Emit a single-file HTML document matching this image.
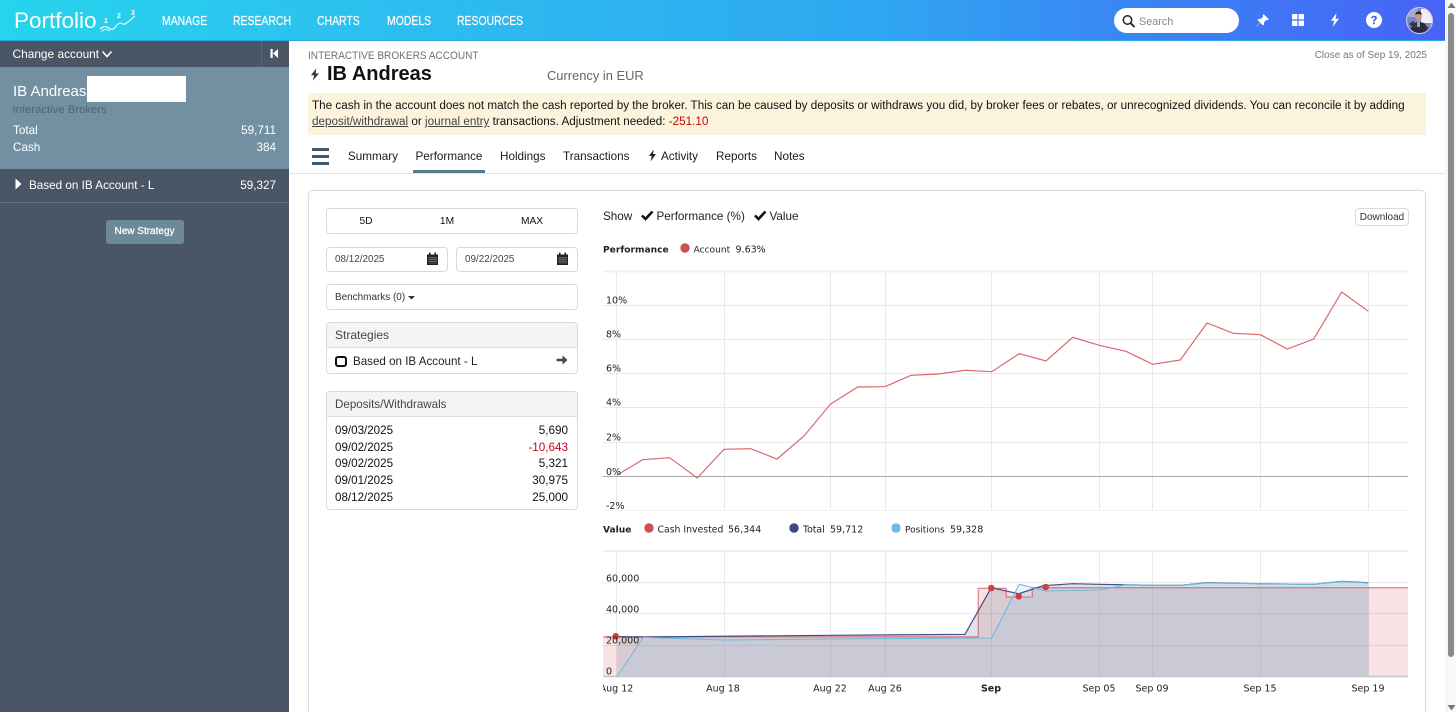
<!DOCTYPE html>
<html><head><meta charset="utf-8"><title>Portfolio</title>
<style>
html,body{margin:0;padding:0;width:1456px;height:712px;overflow:hidden;background:#fff;font-family:"Liberation Sans",sans-serif;color:#111}
#w{position:relative;width:1456px;height:712px;overflow:hidden}
.a{position:absolute}
.t{position:absolute;white-space:nowrap;line-height:16px;height:16px}
.c{transform:translateY(-8px)}
.r{text-align:right}
.nav{color:#fff;font-size:12.5px;-webkit-text-stroke:.2px #fff;transform-origin:0 50%;transform:translateY(-8px) scaleX(.835)}
.box{position:absolute;box-sizing:border-box;background:#fff;border:1px solid #d9d9d9;border-radius:4px}
.tab{font-size:11.7px;color:#1a1a1a}
.sm{font-size:11.7px}
.d{font-size:11.6px}
.tab.c,.sm.c,.d.c{transform:translateY(-7px)}
svg text{font-family:"DejaVu Sans",sans-serif;font-size:9.5px;fill:#222}
</style></head><body><div id="w">
<!-- header -->
<div class="a" style="left:0;top:0;width:1445px;height:41px;background:linear-gradient(90deg,#27d4ec 0%,#2cc0ef 25%,#2fa8f1 60%,#3b82f4 80%,#4763f6 100%);border-bottom:1px solid #27a9e8;box-sizing:border-box"></div>
<div class="t c" style="left:14px;top:21px;color:#fff;font-size:22.5px;line-height:26px;height:26px;transform:translateY(-13px)">Portfolio</div>
<svg class="a" style="left:98px;top:3px" width="42" height="30" viewBox="0 0 42 30">
<path d="M2 26C4 24 6 23 9 24C11 25 13 27 15 26C18 24 20 20 22 20C24 20 25 22 27 21C30 19 34 16 37 13" fill="none" stroke="#fff" stroke-width="1.100"/>
<path d="M3 28.500C6 26 9 26 12 28" fill="none" stroke="#fff" stroke-width=".8"/>
<text x="6" y="20" style="font:bold 7px 'Liberation Sans';fill:#fff">1</text>
<text x="19" y="15" style="font:bold 7px 'Liberation Sans';fill:#fff">2</text>
<text x="33" y="12" style="font:bold 7px 'Liberation Sans';fill:#fff">3</text>
</svg>
<div class="t nav" style="left:162px;top:21px">MANAGE</div>
<div class="t nav" style="left:233px;top:21px">RESEARCH</div>
<div class="t nav" style="left:317px;top:21px">CHARTS</div>
<div class="t nav" style="left:387px;top:21px">MODELS</div>
<div class="t nav" style="left:457px;top:21px">RESOURCES</div>
<div class="a" style="left:1114px;top:8px;width:125px;height:25px;background:#fff;border-radius:13px"></div>
<svg class="a" style="left:1121px;top:13px" width="16" height="16" viewBox="0 0 16 16"><circle cx="6.500" cy="7" r="4.200" fill="none" stroke="#222" stroke-width="1.500"/><path d="M9.700 10.200L13 13.500" stroke="#222" stroke-width="1.900" stroke-linecap="round"/></svg>
<div class="t c" style="left:1139px;top:21.500px;color:#888;font-size:10.800px">Search</div>
<svg class="a" style="left:1254.500px;top:12.500px" width="15" height="15" viewBox="0 0 14 14"><path d="M8 1L13 6L11.600 6.800L10.600 6.400L8.400 8.600L8.600 10.600L7.400 11.600L5 9.200L1.200 13L1 12.800L4.800 9L2.400 6.600L3.400 5.400L5.400 5.600L7.600 3.400L7.200 2.400Z" fill="#fff"/></svg>
<svg class="a" style="left:1292px;top:14px" width="12" height="12" viewBox="0 0 12 12"><path d="M0 1Q0 0 1 0H5.400V5.400H0ZM6.600 0H11Q12 0 12 1V5.400H6.600ZM0 6.600H5.400V12H1Q0 12 0 11ZM6.600 6.600H12V11Q12 12 11 12H6.600Z" fill="#fff"/></svg>
<svg class="a" style="left:1330px;top:13px" width="10" height="14" viewBox="0 0 10 14"><path d="M6.500 0L1 7.800H4.200L2.600 14L9 5.800H5.600Z" fill="#fff"/></svg>
<svg class="a" style="left:1366px;top:12px" width="16" height="16" viewBox="0 0 16 16"><circle cx="8" cy="8" r="8" fill="#fff"/><path d="M5.200 6.200C5.300 4.600 6.500 3.700 8.100 3.700C9.700 3.700 10.900 4.700 10.900 6C10.900 7.900 8.700 7.800 8.700 9.500H7.100C7.100 7.200 9.100 7.200 9.100 6C9.100 5.500 8.700 5.100 8 5.100C7.300 5.100 6.900 5.600 6.800 6.200Z" fill="#3a57ee"/><rect x="7" y="10.400" width="1.800" height="1.800" fill="#3a57ee"/></svg>
<svg class="a" style="left:1406px;top:7px" width="27" height="27" viewBox="0 0 27 27"><defs><clipPath id="av"><circle cx="13.500" cy="13.500" r="13"/></clipPath></defs><circle cx="13.500" cy="13.500" r="13.500" fill="#c9c6d8"/><g clip-path="url(#av)"><rect width="27" height="27" fill="#7f86c4"/><rect x="15" y="2" width="12" height="14" fill="#eef0f6"/><rect y="0" width="12" height="10" fill="#a5a9d2"/><rect y="20" width="27" height="7" fill="#4a4ab8"/><path d="M5 27C5 19 8 15 12 15C15 15 19 15 21 20L20 27Z" fill="#2a2c3c"/><path d="M3 17L7 14L11 19L9 22Z" fill="#34364a"/><ellipse cx="12.500" cy="9.500" rx="3.200" ry="4.400" fill="#c09a84"/><path d="M9 8Q10 3.500 14 4.500Q16 6 15.500 8Q12 6 9 8Z" fill="#2d2320"/><rect x="11" y="14" width="3" height="6" fill="#9aa5c4"/></g><circle cx="13.500" cy="13.500" r="13" fill="none" stroke="#c7c9dc" stroke-width="1"/></svg>

<!-- sidebar -->
<div class="a" style="left:0;top:41px;width:289px;height:671px;background:#4a5565"></div>
<div class="a" style="left:0;top:67px;width:289px;height:102px;background:#7290a2"></div>
<div class="a" style="left:0;top:202px;width:289px;height:1px;background:#65717f"></div>
<div class="a" style="left:261px;top:41px;width:1px;height:26px;background:#5d6877"></div>
<div class="t c" style="left:12.500px;top:54px;color:#fff;font-size:11.900px">Change account</div>
<svg class="a" style="left:101px;top:50px" width="12" height="9" viewBox="0 0 12 9"><path d="M1.500 1.500L6 6.500L10.500 1.500" fill="none" stroke="#fff" stroke-width="1.600"/></svg>
<svg class="a" style="left:270px;top:48px" width="9" height="11" viewBox="0 0 9 11"><rect x="0.500" y="1" width="2.200" height="9" fill="#fff"/><path d="M8 1V10L3 5.500Z" fill="#fff"/></svg>
<div class="t c" style="left:13px;top:92px;color:#fff;font-size:15px">IB Andreas</div>
<div class="a" style="left:87px;top:76px;width:99px;height:26px;background:#fff"></div>
<div class="t c" style="left:12.500px;top:110px;color:#54626f;font-size:11.300px">Interactive Brokers</div>
<div class="t c sm" style="left:13px;top:130px;color:#fff">Total</div>
<div class="t c sm r" style="left:200px;width:76px;top:130px;color:#fff">59,711</div>
<div class="t c sm" style="left:13px;top:147px;color:#fff">Cash</div>
<div class="t c sm r" style="left:200px;width:76px;top:147px;color:#fff">384</div>
<svg class="a" style="left:14px;top:177px" width="9" height="14" viewBox="0 0 9 14"><path d="M1.500 1.500L7.500 7L1.500 12.500Z" fill="#fff"/></svg>
<div class="t c sm" style="left:29px;top:185px;color:#fff">Based on IB Account - L</div>
<div class="t c sm r" style="left:200px;width:76px;top:185px;color:#fff">59,327</div>
<div class="a" style="left:105.500px;top:220px;width:78px;height:24px;background:#6c8a9a;border-radius:3px;color:#fff;font-size:10px;line-height:24.500px;text-align:center;-webkit-text-stroke:.25px #fff">New Strategy</div>

<!-- title -->
<div class="t" style="left:308px;top:47.500px;color:#707070;font-size:11px;transform-origin:0 50%;transform:scaleX(.915)">INTERACTIVE BROKERS ACCOUNT</div>
<svg class="a" style="left:310px;top:68px" width="10" height="13" viewBox="0 0 10 13"><path d="M6.200 0.500L1 7.200H4.200L2.800 12.500L9 5.500H5.600Z" fill="#333"/></svg>
<div class="t c" style="left:327px;top:73.500px;font-size:20px;font-weight:bold;color:#111;line-height:24px;height:24px;transform:translateY(-12px)">IB Andreas</div>
<div class="t c" style="left:547px;top:76px;color:#666;font-size:12.900px">Currency in EUR</div>
<div class="t c r" style="left:1227px;width:200px;top:56px;color:#777;font-size:10px">Close as of Sep 19, 2025</div>

<!-- alert -->
<div class="a" style="left:308px;top:93px;width:1118px;height:42px;background:#fcf3dc"></div>
<div class="t c" style="left:312px;top:106px;font-size:11.690px;color:#111">The cash in the account does not match the cash reported by the broker. This can be caused by deposits or withdraws you did, by broker fees or rebates, or unrecognized dividends. You can reconcile it by adding</div>
<div class="t c" style="left:312px;top:122px;font-size:11.690px;color:#111"><span style="text-decoration:underline;color:#444">deposit/withdrawal</span> or <span style="text-decoration:underline;color:#444">journal entry</span> transactions. Adjustment needed: <span style="color:#c00">-251.10</span></div>

<!-- tabs -->
<div class="a" style="left:312px;top:148px;width:17px;height:3px;background:#3f5a6c"></div>
<div class="a" style="left:312px;top:155px;width:17px;height:3px;background:#3f5a6c"></div>
<div class="a" style="left:312px;top:162px;width:17px;height:3px;background:#3f5a6c"></div>
<div class="t c tab" style="left:348px;top:156px">Summary</div>
<div class="t c tab" style="left:415.500px;top:156px">Performance</div>
<div class="t c tab" style="left:500px;top:156px">Holdings</div>
<div class="t c tab" style="left:563px;top:156px">Transactions</div>
<svg class="a" style="left:648px;top:149px" width="9" height="13" viewBox="0 0 9 13"><path d="M5.800 0.500L1 7H3.800L2.500 12.500L8 5H5Z" fill="#222"/></svg>
<div class="t c tab" style="left:661px;top:156px">Activity</div>
<div class="t c tab" style="left:716px;top:156px">Reports</div>
<div class="t c tab" style="left:774px;top:156px">Notes</div>
<div class="a" style="left:289px;top:173px;width:1156px;height:1px;background:#e2e2e2"></div>
<div class="a" style="left:413px;top:170px;width:72px;height:3px;background:#557a8e"></div>

<!-- card -->
<div class="box" style="left:308px;top:190px;width:1118px;height:540px;border-radius:5px;border-color:#dcdcdc;box-shadow:0 0 3px rgba(0,0,0,.06)"></div>
<div class="box" style="left:325.500px;top:207.500px;width:252px;height:26.500px"></div>
<div class="t c" style="left:326px;width:80px;text-align:center;top:222px;font-size:10.200px">5D</div>
<div class="t c" style="left:407px;width:80px;text-align:center;top:222px;font-size:10.200px">1M</div>
<div class="t c" style="left:492px;width:80px;text-align:center;top:222px;font-size:10.200px">MAX</div>
<div class="box" style="left:325.500px;top:247px;width:122px;height:25px"></div>
<div class="box" style="left:456px;top:247px;width:121.500px;height:25px"></div>
<div class="t c" style="left:335px;top:260px;color:#444;font-size:9.900px">08/12/2025</div>
<div class="t c" style="left:465px;top:260px;color:#444;font-size:9.900px">09/22/2025</div>
<svg class="a" style="left:427px;top:252px" width="11" height="13" viewBox="0 0 11 13"><path d="M0 2.500H2V0.500H3.500V2.500H7.500V0.500H9V2.500H11V13H0Z" fill="#222"/><path d="M1 5.500H10M1 7.500H10M1 9.500H10M3 5V12M5 5V12M7 5V12M9 5V12" stroke="#888" stroke-width=".5"/></svg>
<svg class="a" style="left:557px;top:252px" width="11" height="13" viewBox="0 0 11 13"><path d="M0 2.500H2V0.500H3.500V2.500H7.500V0.500H9V2.500H11V13H0Z" fill="#222"/><path d="M1 5.500H10M1 7.500H10M1 9.500H10M3 5V12M5 5V12M7 5V12M9 5V12" stroke="#888" stroke-width=".5"/></svg>
<div class="box" style="left:325.500px;top:284px;width:252px;height:25.500px"></div>
<div class="t c" style="left:335px;top:298px;color:#333;font-size:9.950px">Benchmarks (0)</div>
<svg class="a" style="left:408px;top:295.500px" width="7" height="4" viewBox="0 0 7 4"><path d="M0 0H7L3.500 3.500Z" fill="#333"/></svg>

<div class="box" style="left:325.500px;top:321.500px;width:252px;height:52.500px"></div>
<div class="a" style="left:326.500px;top:322.500px;width:250px;height:24px;background:#f4f4f4;border-bottom:1px solid #ddd;border-radius:3px 3px 0 0"></div>
<div class="t c" style="left:335px;top:335px;color:#444;font-size:12px">Strategies</div>
<div class="a" style="left:335px;top:355.500px;width:7.500px;height:7.500px;border:2.200px solid #111;border-radius:3px;background:#fff"></div>
<div class="t c d" style="left:353px;top:360.500px;color:#222">Based on IB Account - L</div>
<svg class="a" style="left:556px;top:354px" width="12" height="12" viewBox="0 0 12 12"><path d="M0.500 4.700H6.500V1.500L11.500 6L6.500 10.500V7.300H0.500Z" fill="#3d4757"/></svg>

<div class="box" style="left:325.500px;top:390.500px;width:252px;height:119px"></div>
<div class="a" style="left:326.500px;top:391.500px;width:250px;height:24px;background:#f4f4f4;border-bottom:1px solid #ddd;border-radius:3px 3px 0 0"></div>
<div class="t c d" style="left:335px;top:404px;color:#444">Deposits/Withdrawals</div>
<div class="t c d" style="left:335px;top:429.500px">09/03/2025</div><div class="t c sm r" style="left:468px;width:100px;top:429.500px">5,690</div>
<div class="t c d" style="left:335px;top:446.500px">09/02/2025</div><div class="t c sm r" style="left:468px;width:100px;top:446.500px;color:#d0021b">-10,643</div>
<div class="t c d" style="left:335px;top:463px">09/02/2025</div><div class="t c sm r" style="left:468px;width:100px;top:463px">5,321</div>
<div class="t c d" style="left:335px;top:480px">09/01/2025</div><div class="t c sm r" style="left:468px;width:100px;top:480px">30,975</div>
<div class="t c d" style="left:335px;top:496.500px">08/12/2025</div><div class="t c sm r" style="left:468px;width:100px;top:496.500px">25,000</div>

<!-- show row -->
<div class="t c sm" style="left:603px;top:215.500px;color:#222">Show</div>
<svg class="a" style="left:641px;top:210px" width="13" height="11" viewBox="0 0 13 11"><path d="M1 5.500L4.500 9L11.500 1.500" fill="none" stroke="#111" stroke-width="2.600"/></svg>
<div class="t c sm" style="left:656.500px;top:215.500px;color:#222">Performance (%)</div>
<svg class="a" style="left:754px;top:210px" width="13" height="11" viewBox="0 0 13 11"><path d="M1 5.500L4.500 9L11.500 1.500" fill="none" stroke="#111" stroke-width="2.600"/></svg>
<div class="t c sm" style="left:769.500px;top:215.500px;color:#222">Value</div>
<div class="box" style="left:1355px;top:207.500px;width:54px;height:18.500px;text-align:center;font-size:10px;line-height:17.500px;color:#333">Download</div>

<!-- charts -->
<svg class="a" style="left:0;top:0" width="1456" height="712" viewBox="0 0 1456 712">
<defs><clipPath id="clip"><rect x="603" y="500" width="810" height="212"/></clipPath></defs>
<text x="603" y="252.500" style="font-weight:bold;font-size:9.100px">Performance</text>
<circle cx="685" cy="248" r="4.700" fill="#cf4f57"/>
<text x="693.500" y="252.500" style="font-size:9.100px">Account</text><text x="735.500" y="252.500">9.63%</text>

<g stroke="#e9e9e9" stroke-width="1" shape-rendering="crispEdges" fill="none">
<path d="M603 271.500H1408" stroke="#f0f0f0" stroke-width="2"/>
<path d="M603 305.500H1408M603 339.500H1408M603 373.500H1408M603 407.500H1408M603 442.500H1408"/>
<path d="M603 510.500H1408" stroke="#f3f3f3"/>
<path d="M616.500 271V510M724.500 271V510M830.500 271V510M885.500 271V510M991.500 271V510M1099.500 271V510M1152.500 271V510M1260.500 271V510M1368.500 271V510"/>
</g>
<path d="M603 476.500H1408" stroke="#aaa" stroke-width="1" shape-rendering="crispEdges"/>
<polyline fill="none" stroke="#d9666c" stroke-width="1.200" points="617,475 642.700,459.700 669.700,457.700 697.300,478 724,449.300 750.700,448.700 777,459 804,436 830.300,404.300 857.700,387 885,386.700 911,375.300 938.300,374 965,370.300 991.700,371.700 1019.300,353.700 1046,361 1072.700,337.300 1099.300,345.300 1126,351.300 1152.700,364.300 1180.300,360 1207,323 1233.300,333.300 1260.300,334.700 1287.300,349 1313.700,339 1341.700,292 1368.300,311.300"/>
<text x="606" y="303.500">10%</text><text x="606" y="337.500">8%</text><text x="606" y="371.500">6%</text><text x="606" y="405.500">4%</text><text x="606" y="440.500">2%</text><text x="606" y="475">0%</text><text x="606" y="509">-2%</text>

<text x="603" y="532.500" style="font-weight:bold;font-size:9.100px">Value</text>
<circle cx="649" cy="528" r="4.700" fill="#cf4f57"/>
<text x="657.500" y="532.500" style="font-size:9.300px">Cash Invested</text><text x="728" y="532.500">56,344</text>
<circle cx="794" cy="528" r="4.700" fill="#3c4a80"/>
<text x="803" y="532.500" style="font-size:9.300px">Total</text><text x="830" y="532.500">59,712</text>
<circle cx="896" cy="528" r="4.700" fill="#6fbade"/>
<text x="905" y="532.500" style="font-size:9.000px">Positions</text><text x="950" y="532.500">59,328</text>

<g stroke="#e9e9e9" stroke-width="1" shape-rendering="crispEdges" fill="none">
<path d="M603 551H1408" stroke="#f0f0f0" stroke-width="2"/>
<path d="M603 582.500H1408M603 613.500H1408M603 645.500H1408"/>
<path d="M616.500 551V677M724.500 551V677M830.500 551V677M885.500 551V677M991.500 551V677M1099.500 551V677M1152.500 551V677M1260.500 551V677M1368.500 551V677"/>
</g>
<!-- fills -->
<path d="M603 636.800H978.300V588.300H1006.300V597H1032.300V587.700H1408V676.500H603Z" fill="#cd3c41" fill-opacity=".14"/>
<path d="M617 636.700L643 637L830.300 635.300L965 634.300L991.300 587.700L1018.700 593.700L1043 585.700L1072.700 583.700L1099 584.300L1152.700 585.300L1180 585.300L1207 582.700L1260.300 583.700L1313.700 584.300L1341.700 581.300L1368.300 582.700V676.500H617Z" fill="#3c5a7d" fill-opacity=".17"/>
<path d="M617 676.500L643.300 637.300L724 640L830 639L991.700 638L1019.300 584.300L1046 591L1099.300 590L1126 584.700L1152.700 585.300L1180 585.300L1207 583L1260.300 583.700L1313.700 584.300L1341.700 581.500L1368.300 583V676.500Z" fill="#6ec8eb" fill-opacity=".14"/>
<path d="M603 676.500H1408" stroke="#c4c4cc" stroke-width="1.500"/>
<!-- lines -->
<path d="M603 636.800H978.300V588.300H1006.300V597H1032.300V587.700H1408" fill="none" stroke="#d5666c" stroke-opacity=".75" stroke-width="1.300"/>
<path d="M617 636.700L643 637L830.300 635.300L965 634.300L991.300 587.700L1018.700 593.700L1043 585.700L1072.700 583.700L1099 584.300L1152.700 585.300L1180 585.300L1207 582.700L1260.300 583.700L1313.700 584.300L1341.700 581.300L1368.300 582.700" fill="none" stroke="#3f4f85" stroke-width="1.200"/>
<path d="M617 676.500L643.300 637.300L724 640L830 639L991.700 638L1019.300 584.300L1046 591L1099.300 590L1126 584.700L1152.700 585.300L1180 585.300L1207 583L1260.300 583.700L1313.700 584.300L1341.700 581.500L1368.300 583" fill="none" stroke="#70bade" stroke-width="1.100"/>
<g fill="#cf3f45"><circle cx="615.700" cy="636.300" r="3.300"/><circle cx="991.300" cy="588" r="3.300"/><circle cx="1018.700" cy="596.300" r="3.300"/><circle cx="1045.700" cy="587" r="3.300"/></g>
<text x="606" y="581.500">60,000</text><text x="606" y="612.500">40,000</text><text x="606" y="643.500">20,000</text><text x="606" y="674.500">0</text>
<g text-anchor="middle" clip-path="url(#clip)">
<text x="616.500" y="691.500">Aug 12</text><text x="723" y="691.500">Aug 18</text><text x="830" y="691.500">Aug 22</text><text x="885" y="691.500">Aug 26</text>
<text x="991" y="691.500" style="font-weight:bold">Sep</text>
<text x="1099" y="691.500">Sep 05</text><text x="1152" y="691.500">Sep 09</text><text x="1260" y="691.500">Sep 15</text><text x="1368" y="691.500">Sep 19</text>
</g>
</svg>

<!-- scrollbar -->
<div class="a" style="left:1446px;top:0;width:10px;height:712px;background:#fafafa;border-left:1px solid #ececec;box-sizing:border-box"></div>
<div class="a" style="left:1448px;top:13px;width:6px;height:644px;background:#8a8a8a;border-radius:3px"></div>
<svg class="a" style="left:1447px;top:2px" width="9" height="7" viewBox="0 0 9 7"><path d="M4.500 0.500L8.500 6H0.500Z" fill="#777"/></svg>
<svg class="a" style="left:1447px;top:704px" width="9" height="7" viewBox="0 0 9 7"><path d="M0.500 1H8.500L4.500 6.500Z" fill="#777"/></svg>
</div></body></html>
